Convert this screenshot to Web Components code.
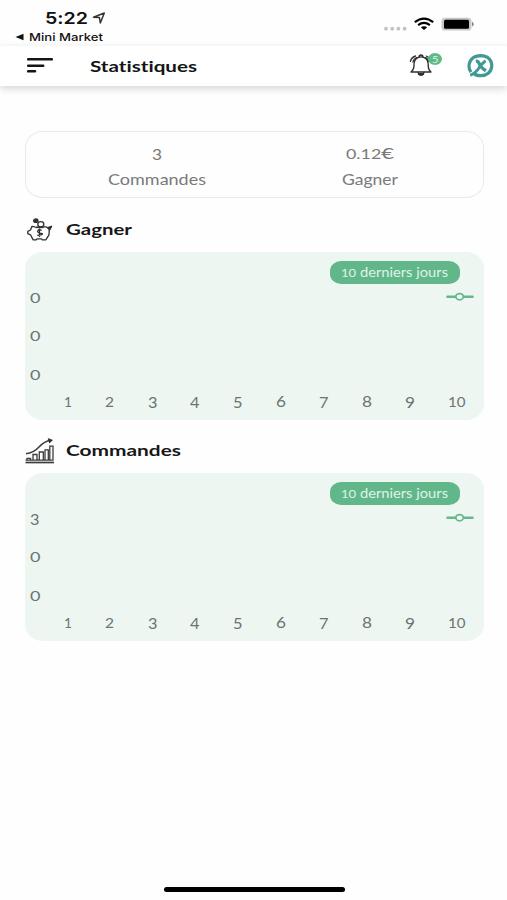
<!DOCTYPE html>
<html lang="fr">
<head>
<meta charset="utf-8">
<title>Statistiques</title>
<style>
html,body{margin:0;background:#fefefe}
</style>
</head>
<body>
<stats-app></stats-app>
<script>
const define = (name, html, setup) => {
  const tpl = document.createElement('template');
  customElements.define(name, class extends HTMLElement {
    connectedCallback() {
      if (this.shadowRoot) return;
      tpl.innerHTML = typeof html === 'function' ? html(this) : html;
      this.attachShadow({mode: 'open'}).append(tpl.content.cloneNode(true));
      if (setup) setup(this);
    }
  });
};

/* Text stretched horizontally to the width given in the "w" attribute. */
define('wide-text', el => `<style>
:host{display:block;flex:none;width:${el.getAttribute('w')}px;white-space:nowrap;overflow:visible}
span{display:inline-block;transform-origin:0 50%;font-variant-ligatures:none}
</style><span><slot></slot></span>`, el => {
  const s = el.shadowRoot.querySelector('span');
  s.style.transform = `scaleX(${(+el.getAttribute('w') / s.getBoundingClientRect().width).toFixed(4)})`;
});

/* Old-style figure: 0-2 at x-height, 6 and 8 rise, the rest descend. */
define('old-figure', el => {
  const v = el.getAttribute('v');
  const small = /^[012]+$/.test(v), up = /[68]/.test(v);
  const w = {1: 8, 2: 9, 6: 10, 8: 10, 9: 10, 0: 10.5, 10: 17.5}[v] || 9.5;
  return `<style>
:host{display:block;height:16px;line-height:16px;color:#6b746f;font-size:${small ? 12.8 : 14.8}px}
wide-text{position:relative;top:${small ? 0 : up ? -1 : .5}px}
</style><wide-text w="${w}">${v}</wide-text>`;
});

define('status-bar', `<style>
:host{display:flex;justify-content:space-between;height:45px;box-sizing:border-box;padding:8px 32px 0 15px;font-family:Inter,"Liberation Sans",sans-serif;color:#111}
.time{display:flex;gap:4px;padding-left:30px;height:20px;font-size:16.5px;line-height:20px;font-weight:600}
.back{display:flex;gap:5px;align-items:center;height:18px;font-size:11px;line-height:18px;font-weight:500}
.right{display:flex;align-items:flex-start;gap:7px}
svg{display:block;flex:none}
</style>
<div><div class="time"><wide-text w="43">5:22</wide-text><svg width="15" height="20" viewBox="0 0 15 20"><path d="M1.5 9.2 12.3 5 8.3 15 7.4 9.6Z" fill="none" stroke="#333" stroke-width="1.5" stroke-linejoin="round"/></svg></div>
<div class="back"><svg width="9" height="8" viewBox="0 0 9 8"><path d="M0.5 4 8.5 .7V7.3Z" fill="#111"/></svg><wide-text w="74">Mini Market</wide-text></div></div>
<div class="right">
<svg width="24" height="28" viewBox="0 0 24 28" fill="#c2c2c2"><circle cx="3" cy="20.7" r="1.9"/><circle cx="9.2" cy="20.7" r="1.9"/><circle cx="15.4" cy="20.7" r="1.9"/><circle cx="21.6" cy="20.7" r="1.9"/></svg>
<svg width="20" height="28" viewBox="0 0 20 28"><g fill="none" stroke="#000" stroke-width="2.1"><path d="M.8 14.2Q10 7 19.2 14.2"/><path d="M4.1 17.1Q10 12.6 15.9 17.1"/></g><path d="M6.8 19.3Q10 17 13.2 19.3L10 22Z"/></svg>
<svg width="34" height="28" viewBox="0 0 34 28"><rect x=".5" y="9.7" width="30" height="12.8" rx="3.6" fill="#c8c8c8"/><rect x="3" y="11.7" width="25" height="9" rx="1.5"/><path d="M31 13.6q3.4 2.6 0 5.2Z" fill="#888"/></svg>
</div>`);

define('app-header', `<style>
:host{display:flex;align-items:center;height:41px;box-sizing:border-box;padding:0 13px 0 27px;background:#fff;border-top:1px solid #f6f6f6;box-shadow:0 3px 7px #00000026;color:#151515}
.title{margin-left:37px;font-size:16px;font-weight:700;line-height:20px}
.actions{display:flex;margin-left:auto;align-items:center;gap:24px;height:40px}
.bell{position:relative;width:34px;height:28px}
.badge{position:absolute;left:19px;top:1px;width:14px;height:12px;border-radius:50%;background:#5fba89;color:#dff5e8;font-size:10px;line-height:12px;padding-left:4px;box-sizing:border-box}
svg{display:block;flex:none}
</style>
<svg width="26" height="18" viewBox="0 0 26 18"><path d="M1.2 2.3H24.8M1.2 8.7H16.2M1.2 14.3H8" stroke="#151515" stroke-width="2.6" stroke-linecap="round"/></svg>
<wide-text class="title" w="107"><slot></slot></wide-text>
<div class="actions">
<div class="bell"><svg width="24" height="28" viewBox="0 0 24 28" fill="none" stroke="#303030" stroke-width="1.35" stroke-linecap="round" stroke-linejoin="round"><path d="M2 20H22Q19.3 18 19.2 14V11.8C19.2 2.6 5 2.6 5 11.8V14Q4.8 18 2 20Z"/><path d="M10 5.2Q10 3 12 3T14 5.2M9.2 20.4Q9.6 23.3 12 23.3T14.8 20.4"/><path d="M9.8 22H14.2" stroke-width="2"/><path d="M1.4 9.3Q2.2 5.7 6.5 4M4 10Q4.4 7.2 7.7 5.5M17.5 4.2Q20.6 5.5 21.6 8.5M16.6 5.7Q19 7 19.6 9.3"/></svg><div class="badge"><wide-text w="6.5">5</wide-text></div></div>
<svg width="27" height="26" viewBox="0 0 27 26" fill="none" stroke="#429994"><path d="M4 19.2C-.6 12.2 3 3.1 13.5 2.7 21.5 2.7 25 7.5 24.8 12.8 24.5 19.4 19.5 22.8 13.6 22.7 10.4 22.7 8 21.6 6.4 20" stroke-width="3.2"/><path d="M3.2 22.4Q8.2 20.2 10.8 16.6 14 11 18.6 7.8" stroke-width="2.9"/><path d="M8.8 8.2Q11.1 7.8 12.6 11.3T18.9 17.7" stroke-width="3.4"/></svg>
</div>`);

define('summary-card', `<style>
:host{display:grid;grid-template-columns:1fr 1fr;box-sizing:border-box;height:67px;border:1.3px solid #e9e9e9;border-radius:18px/16px;background:#fefefe;color:#7a7a7a;font-size:15px}
.col{display:flex;flex-direction:column;align-items:center;gap:6px;padding-top:11px;line-height:20px}
.left{padding-left:35px}
.right{padding-left:3px}
.val{height:20px}
.fig{position:relative;top:1px}
.small{font-size:13px}.euro{font-size:16px}
</style>
<div class="col left"><div class="val fig"><wide-text w="10">3</wide-text></div><wide-text w="98">Commandes</wide-text></div>
<div class="col right"><div class="val"><wide-text w="48"><span class="small">0.12</span><span class="euro">€</span></wide-text></div><wide-text w="56">Gagner</wide-text></div>`);

define('section-title', el => `<style>
:host{display:flex;align-items:center;gap:12px;height:28px;color:#171717;font-size:15.5px;font-weight:700;line-height:20px}
wide-text{padding-bottom:2px}
::slotted(svg){display:block;flex:none}
</style><slot name="icon"></slot><wide-text w="${el.getAttribute('w')}"><slot></slot></wide-text>`);

define('stat-chart', el => `<style>
:host{display:block;position:relative;box-sizing:border-box;height:168px;border-radius:18px/16px;background:#edf6f1}
.top{display:flex;justify-content:flex-end;padding:9px 24px 0 0}
.pill{display:flex;justify-content:center;align-items:center;width:130px;height:23px;border-radius:11px/10px;background:#62b78a;color:#dff3e8;font-size:13.5px;line-height:20px}
.pill small{font-size:12px}
.legend{position:absolute;right:10px;top:39px;display:block}
.y{display:flex;flex-direction:column;justify-content:space-between;height:93px;padding:6px 0 0 5.3px}
.x{display:flex;justify-content:space-between;padding:11px 17.5px 0 39.5px}
</style>
<div class="top"><div class="pill"><wide-text w="107"><small>10</small> derniers jours</wide-text></div></div>
<svg class="legend" width="28" height="12" viewBox="0 0 28 12"><path d="M1.5 5.7H26.5" stroke="#65b78c" stroke-width="2.6" stroke-linecap="round"/><ellipse cx="13.6" cy="5.7" rx="3.7" ry="3.1" fill="#f6fbf8" stroke="#65b78c" stroke-width="1.8"/></svg>
<div class="y">${el.getAttribute('ticks').split(',').map(v => `<old-figure v="${v}"></old-figure>`).join('')}</div>
<div class="x">${[1,2,3,4,5,6,7,8,9,10].map(v => `<old-figure v="${v}"></old-figure>`).join('')}</div>`);

define('stats-app', `<style>
:host{display:flex;flex-direction:column;box-sizing:border-box;width:507px;height:900px;background:#fefefe;font-family:Lato,"Open Sans",sans-serif}
main{display:flex;flex-direction:column;padding:45px 23.5px 0 24.5px}
section-title{margin:18px 0 7.6px}
stat-chart+section-title{margin:17px 0 8px}
.home{width:181px;height:5px;border-radius:3px;background:#000;margin:auto auto 8px 163.5px}
</style>
<status-bar></status-bar>
<app-header>Statistiques</app-header>
<main>
<summary-card></summary-card>
<section-title w="66"><svg slot="icon" width="29" height="28" viewBox="0 0 29 28" fill="none" stroke="#303030" stroke-width="1.3" stroke-linejoin="round"><path d="M10 10.8 7 10.3 5.5 14 2.8 15.3V17.7L5.5 18.8 8.2 23.9H11.2L12 22.9H16.5L17.3 23.9H20.8L24 18.8 24.2 14.6 26.5 10.4 23.5 12.4 21 10.8H18"/><ellipse cx="15.8" cy="8.3" rx="3" ry="2.6"/><ellipse cx="10.8" cy="4.7" rx="2.1" ry="1.7" fill="#303030"/><path d="M10.3 11.3H18.5" stroke-width="1.7"/><path d="M16.6 14.3Q13.8 12.9 12.8 14.7T16 17.4 12.3 19.4M14.5 12.5V21"/><path d="M22.8 11.7 26.5 10.4 24.2 13.7Z" fill="#303030"/></svg>Gagner</section-title>
<stat-chart ticks="0,0,0"></stat-chart>
<section-title w="115"><svg slot="icon" width="29" height="28" viewBox="0 0 29 28" fill="none" stroke="#3c3c3c" stroke-width="1.3"><path d="M.5 25.5H29" stroke-width="1.7"/><path d="M2 23V21.3H5.5V23M8 23V17.5H12V23H14.3V15H18.3V23H20V12.8H23.3V23H24.8V9.2H28V23M.5 23.2H28.5"/><path d="M1 16.8Q8.5 16 14 10T25.5 3.5" stroke-width="1.5"/><path d="M22.7 1 28 3 24.3 6.6Z" fill="#303030" stroke="none"/></svg>Commandes</section-title>
<stat-chart ticks="3,0,0"></stat-chart>
</main>
<div class="home"></div>`);
</script>
</body>
</html>
